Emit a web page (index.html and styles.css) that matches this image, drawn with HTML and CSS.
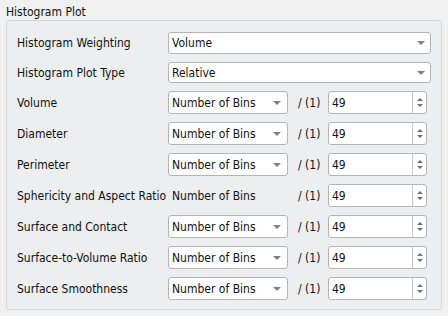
FILE: index.html
```html
<!DOCTYPE html>
<html lang="en">

<head>
    <meta charset="UTF-8">
    <title>Histogram Plot</title>
    <link rel="stylesheet" href="styles.css">
</head>

<body>

    <div class="title">Histogram Plot</div>

    <div class="group">
        <div class="row-label">Histogram Weighting</div>
        <div class="combo wide"><span>Volume</span><i class="arrow"></i></div>

        <div class="row-label">Histogram Plot Type</div>
        <div class="combo wide"><span>Relative</span><i class="arrow"></i></div>

        <div class="row-label">Volume</div>
        <div class="combo"><span>Number of Bins</span><i class="arrow"></i></div>
        <div class="sep">/ (1)</div>
        <div class="spin"><span>49</span><div class="spin-btns"><i class="up"></i><i class="down"></i></div></div>

        <div class="row-label">Diameter</div>
        <div class="combo"><span>Number of Bins</span><i class="arrow"></i></div>
        <div class="sep">/ (1)</div>
        <div class="spin"><span>49</span><div class="spin-btns"><i class="up"></i><i class="down"></i></div></div>

        <div class="row-label">Perimeter</div>
        <div class="combo"><span>Number of Bins</span><i class="arrow"></i></div>
        <div class="sep">/ (1)</div>
        <div class="spin"><span>49</span><div class="spin-btns"><i class="up"></i><i class="down"></i></div></div>

        <div class="row-label">Sphericity and Aspect Ratio</div>
        <div class="plain">Number of Bins</div>
        <div class="sep">/ (1)</div>
        <div class="spin"><span>49</span><div class="spin-btns"><i class="up"></i><i class="down"></i></div></div>

        <div class="row-label">Surface and Contact</div>
        <div class="combo"><span>Number of Bins</span><i class="arrow"></i></div>
        <div class="sep">/ (1)</div>
        <div class="spin"><span>49</span><div class="spin-btns"><i class="up"></i><i class="down"></i></div></div>

        <div class="row-label">Surface-to-Volume Ratio</div>
        <div class="combo"><span>Number of Bins</span><i class="arrow"></i></div>
        <div class="sep">/ (1)</div>
        <div class="spin"><span>49</span><div class="spin-btns"><i class="up"></i><i class="down"></i></div></div>

        <div class="row-label">Surface Smoothness</div>
        <div class="combo"><span>Number of Bins</span><i class="arrow"></i></div>
        <div class="sep">/ (1)</div>
        <div class="spin"><span>49</span><div class="spin-btns"><i class="up"></i><i class="down"></i></div></div>
    </div>

</body>

</html>
```

FILE: styles.css
```css
body {
    background: #f0f0f0;
    font-family: "DejaVu Sans Condensed", "DejaVu Sans", sans-serif;
    font-size: 12px;
    color: #111;
    margin: 0;
}

.title {
    padding: 4px 6px 0;
    height: 16px;
    line-height: 16px;
}

.group {
    margin: 0 6px;
    padding: 11px 10px 9px;
    background: #eceef0;
    border: 1px solid #d4d6d8;
    border-radius: 3px;
    display: grid;
    grid-template-columns: 151px 120px 40px 99px 4px;
    grid-template-rows: 22px 21px repeat(7, 23px);
    row-gap: 8px;
    align-items: center;
}

.row-label {
    grid-column: 1;
    white-space: nowrap;
}

.combo {
    height: 100%;
    box-sizing: border-box;
    background: #fff;
    border: 1px solid #b4b4b4;
    border-radius: 3px;
    display: flex;
    align-items: center;
    padding: 0 6px 0 3px;
}

.combo span {
    flex-grow: 1;
    white-space: nowrap;
}

.combo.wide {
    grid-column: 2 / 6;
    padding-right: 5px;
}

.arrow {
    width: 0;
    height: 0;
    border-left: 4px solid transparent;
    border-right: 4px solid transparent;
    border-top: 4px solid #808080;
}

.plain {
    padding-left: 4px;
    white-space: nowrap;
}

.sep {
    padding-left: 10px;
    white-space: nowrap;
}

.spin {
    height: 100%;
    box-sizing: border-box;
    background: #fff;
    border: 1px solid #b4b4b4;
    border-radius: 3px;
    display: flex;
    align-items: center;
}

.spin span {
    flex-grow: 1;
    padding-left: 3px;
}

.spin-btns {
    width: 13px;
    height: 100%;
    border-left: 1px solid #c8c8c8;
    display: flex;
    flex-direction: column;
    align-items: center;
    justify-content: center;
    gap: 3px;
}

.spin-btns .up {
    width: 0;
    height: 0;
    border-left: 3.5px solid transparent;
    border-right: 3.5px solid transparent;
    border-bottom: 3px solid #707070;
}

.spin-btns .down {
    width: 0;
    height: 0;
    border-left: 3.5px solid transparent;
    border-right: 3.5px solid transparent;
    border-top: 3px solid #707070;
}
```
